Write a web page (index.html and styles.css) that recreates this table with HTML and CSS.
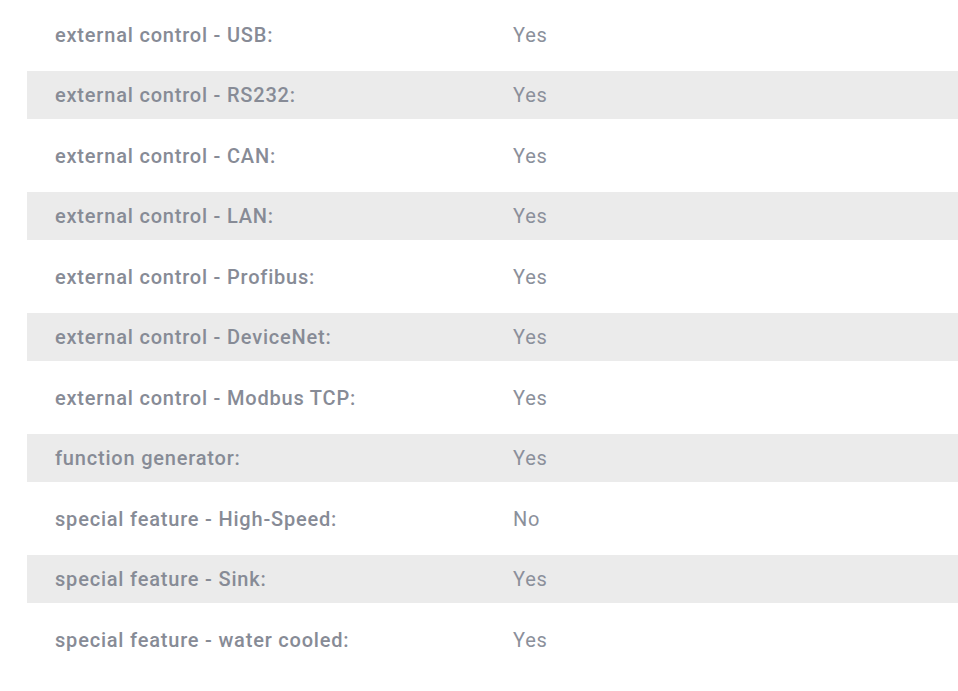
FILE: index.html
```html
<!DOCTYPE html>
<html>
<head>
<meta charset="utf-8">
<link rel="stylesheet" href="styles.css">
</head>
<body>
<div class="specs">
  <div class="row"><div class="label">external control - USB:</div><div class="value">Yes</div></div>
  <div class="row alt"><div class="label">external control - RS232:</div><div class="value">Yes</div></div>
  <div class="row"><div class="label">external control - CAN:</div><div class="value">Yes</div></div>
  <div class="row alt"><div class="label">external control - LAN:</div><div class="value">Yes</div></div>
  <div class="row"><div class="label">external control - Profibus:</div><div class="value">Yes</div></div>
  <div class="row alt"><div class="label">external control - DeviceNet:</div><div class="value">Yes</div></div>
  <div class="row"><div class="label">external control - Modbus TCP:</div><div class="value">Yes</div></div>
  <div class="row alt"><div class="label">function generator:</div><div class="value">Yes</div></div>
  <div class="row"><div class="label">special feature - High-Speed:</div><div class="value">No</div></div>
  <div class="row alt"><div class="label">special feature - Sink:</div><div class="value">Yes</div></div>
  <div class="row"><div class="label">special feature - water cooled:</div><div class="value">Yes</div></div>
</div>
</body>
</html>
```
FILE: styles.css
```css
html, body {
  margin: 0;
  padding: 0;
  background: #ffffff;
}
body {
  font-family: Roboto, "Liberation Sans", sans-serif;
  overflow: hidden;
}
.specs {
  display: flex;
  flex-direction: column;
  gap: 12.5px;
  margin: 10.5px 0 0 27px;
}
.row {
  display: grid;
  grid-template-columns: 458px 1fr;
  height: 48px;
  align-items: center;
  font-size: 20px;
  letter-spacing: 0.8px;
}
.row.alt {
  background: #ebebeb;
}
.label {
  padding-left: 28px;
  font-weight: 500;
  color: #878b96;
}
.value {
  padding-left: 28px;
  font-weight: 400;
  color: #8b909b;
}
```
